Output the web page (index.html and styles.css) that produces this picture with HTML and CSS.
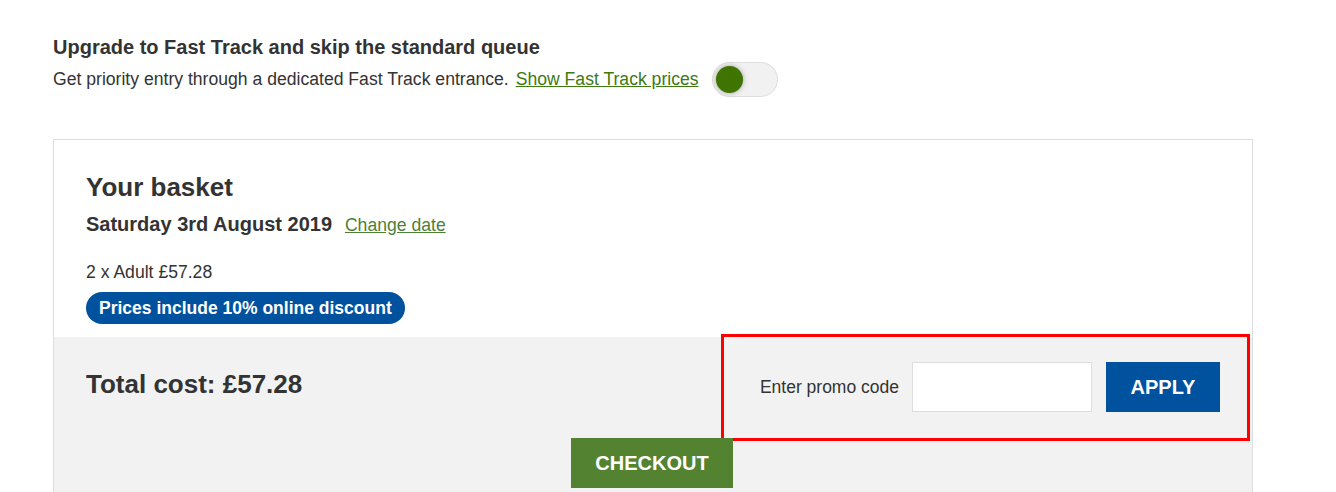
FILE: index.html
```html
<!DOCTYPE html>
<html lang="en">
<head>
    <meta charset="UTF-8">
    <meta name="viewport" content="width=device-width, initial-scale=1.0">
    <title>Your basket</title>
    <link rel="stylesheet" href="styles.css">
</head>
<body>
    <div class="page">
        <!-- Fast Track upsell -->
        <div class="upsell">
            <h3 class="upsell-title">Upgrade to Fast Track and skip the standard queue</h3>
            <div class="upsell-row">
                <span>Get priority entry through a dedicated Fast Track entrance.</span>
                <a href="#" class="link link-strong">Show Fast Track prices</a>
                <label class="toggle">
                    <input type="checkbox">
                    <span class="toggle-knob"></span>
                </label>
            </div>
        </div>

        <div class="basket">
            <div class="basket-body">
                <h2 class="basket-title">Your basket</h2>
                <div class="basket-date">
                    <strong>Saturday 3rd August 2019</strong>
                    <a href="#" class="link">Change date</a>
                </div>
                <p class="basket-line">2 x Adult £57.28</p>
                <span class="discount-pill">Prices include 10% online discount</span>
            </div>

            <div class="basket-footer">
                <div class="basket-summary">
                    <div class="total">Total cost: £57.28</div>
                    <form class="promo promo--highlighted" onsubmit="return false">
                        <label for="promo-code" class="promo-label">Enter promo code</label>
                        <input type="text" id="promo-code" class="promo-input">
                        <button type="submit" class="button button-apply">APPLY</button>
                    </form>
                </div>
                <div class="checkout">
                    <button class="button button-checkout">CHECKOUT</button>
                </div>
            </div>
        </div>
    </div>
</body>
</html>
```

FILE: styles.css
```css
body {
    font-family: 'Liberation Sans', Arial, sans-serif;
    font-size: 17.6px;
    color: #333;
    background-color: #fff;
    margin: 0;
    padding: 0;
}
.page {
    width: 1200px;
    margin-left: 53px;
    padding-top: 36px;
}
.upsell-title {
    font-size: 20px;
    line-height: 22px;
    margin: 0;
}
.upsell-row {
    display: flex;
    align-items: center;
    margin-top: 4px;
    height: 35px;
}
.link {
    color: #4e7f38;
    text-decoration: underline;
    margin-left: 8px;
}
.link-strong {
    color: #3d7a10;
    margin-left: 7px;
}
.toggle {
    position: relative;
    display: inline-block;
    width: 66px;
    height: 35px;
    margin-left: 13px;
    box-sizing: border-box;
    border: 1px solid #ddd;
    border-radius: 18px;
    background-color: #f1f1f1;
    cursor: pointer;
}
.toggle input {
    display: none;
}
.toggle-knob {
    position: absolute;
    top: 3px;
    left: 3px;
    width: 27px;
    height: 27px;
    border-radius: 50%;
    background-color: #3f7400;
    box-shadow: 0 0 5px rgba(0, 0, 0, 0.35);
}
.basket {
    margin-top: 42px;
    border: 1px solid #ddd;
    border-bottom: none;
}
.basket-body {
    padding: 32px 32px 13px;
}
.basket-title {
    font-size: 26px;
    line-height: 30px;
    margin: 0;
}
.basket-date {
    line-height: 24px;
    margin-top: 10px;
}
.basket-date strong {
    font-size: 20px;
}
.basket-line {
    line-height: 20px;
    margin: 25px 0 10px;
}
.discount-pill {
    display: inline-block;
    background-color: #00519e;
    color: #fff;
    font-weight: bold;
    font-size: 17.5px;
    line-height: 20px;
    padding: 6px 13px;
    border-radius: 16px;
}
.basket-footer {
    background-color: #f2f2f2;
    padding: 0 5px 20px 32px;
}
.basket-summary {
    display: flex;
    justify-content: space-between;
    align-items: center;
}
.total {
    font-size: 26px;
    line-height: 30px;
    font-weight: bold;
    margin-bottom: 8px;
}
.promo {
    display: flex;
    align-items: center;
    padding: 25px 27px 26px 36px;
    margin: 0;
}
.promo--highlighted {
    outline: 3px solid #ff0000;
}
.promo-label {
    font-size: 17.5px;
}
.promo-input {
    width: 180px;
    height: 50px;
    box-sizing: border-box;
    margin-left: 13px;
    border: 1px solid #ddd;
    background-color: #fff;
    font-size: 17.5px;
    padding: 0 10px;
}
.button {
    height: 50px;
    border: none;
    color: #fff;
    font-family: inherit;
    font-weight: bold;
    cursor: pointer;
}
.button-apply {
    width: 114px;
    margin-left: 14px;
    font-size: 20px;
    background-color: #00519e;
}
.checkout {
    display: flex;
    justify-content: center;
    margin-left: -29px;
}
.button-checkout {
    width: 162px;
    font-size: 20px;
    background-color: #538330;
}
```
